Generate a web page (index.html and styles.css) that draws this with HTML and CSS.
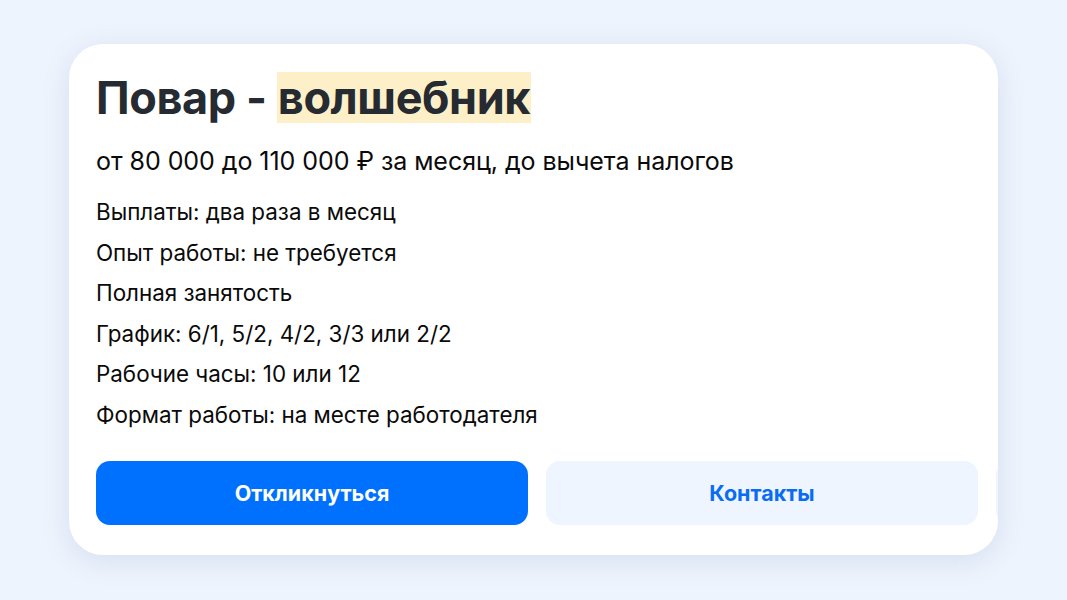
FILE: index.html
```html
<!DOCTYPE html>
<html lang="ru">
<head>
<meta charset="utf-8">
<link rel="stylesheet" href="styles.css">
</head>
<body>
<main class="page">
  <section class="card">
    <h1 class="title">Повар - <span class="hl">волшебник</span></h1>
    <p class="salary">от 80 000 до 110 000 ₽ за месяц, до вычета налогов</p>
    <ul class="facts">
      <li>Выплаты: два раза в месяц</li>
      <li>Опыт работы: не требуется</li>
      <li>Полная занятость</li>
      <li>График: 6/1, 5/2, 4/2, 3/3 или 2/2</li>
      <li>Рабочие часы: 10 или 12</li>
      <li>Формат работы: на месте работодателя</li>
    </ul>
    <div class="actions">
      <button class="btn btn-primary">Откликнуться</button>
      <button class="btn btn-secondary">Контакты</button>
      <button class="btn btn-secondary"></button>
    </div>
  </section>
</main>
</body>
</html>
```

FILE: styles.css
```css
* { box-sizing: border-box; }
html, body { margin: 0; padding: 0; }
body {
  background: #eef4fd;
  font-family: Inter, "Noto Sans", "Liberation Sans", sans-serif;
  color: #111;
}
.page {
  padding: 44px 0 0 69px;
  height: 600px;
}
.card {
  width: 929px;
  height: 511px;
  background: #fff;
  border-radius: 34px;
  box-shadow: 0 6px 28px rgba(70, 100, 160, 0.14);
  padding: 28px 0 30px 27px;
  overflow: hidden;
}
.title {
  margin: 0;
  font-size: 45px;
  line-height: 51px;
  font-weight: 700;
  color: #262b31;
  letter-spacing: -0.4px;
}
.hl {
  display: inline-block;
  background: #fdf0c9;
  padding: 0 1px;
}
.salary {
  margin: 23px 0 0;
  font-size: 25px;
  line-height: 30px;
  color: #0a0a0a;
  letter-spacing: -0.05px;
}
.facts {
  list-style: none;
  margin: 16px 0 0;
  padding: 0;
  font-size: 22.4px;
  line-height: 40.5px;
  color: #0a0a0a;
}
.actions {
  margin-top: 26px;
  display: flex;
  gap: 18px;
}
.btn {
  flex: 0 0 432px;
  height: 64px;
  border: 0;
  border-radius: 14px;
  font-family: inherit;
  font-size: 21.5px;
  font-weight: 700;
  cursor: pointer;
}
.btn-primary {
  background: #0070ff;
  color: #fff;
}
.btn-secondary {
  background: #eef5ff;
  color: #0a6cf5;
}
```
